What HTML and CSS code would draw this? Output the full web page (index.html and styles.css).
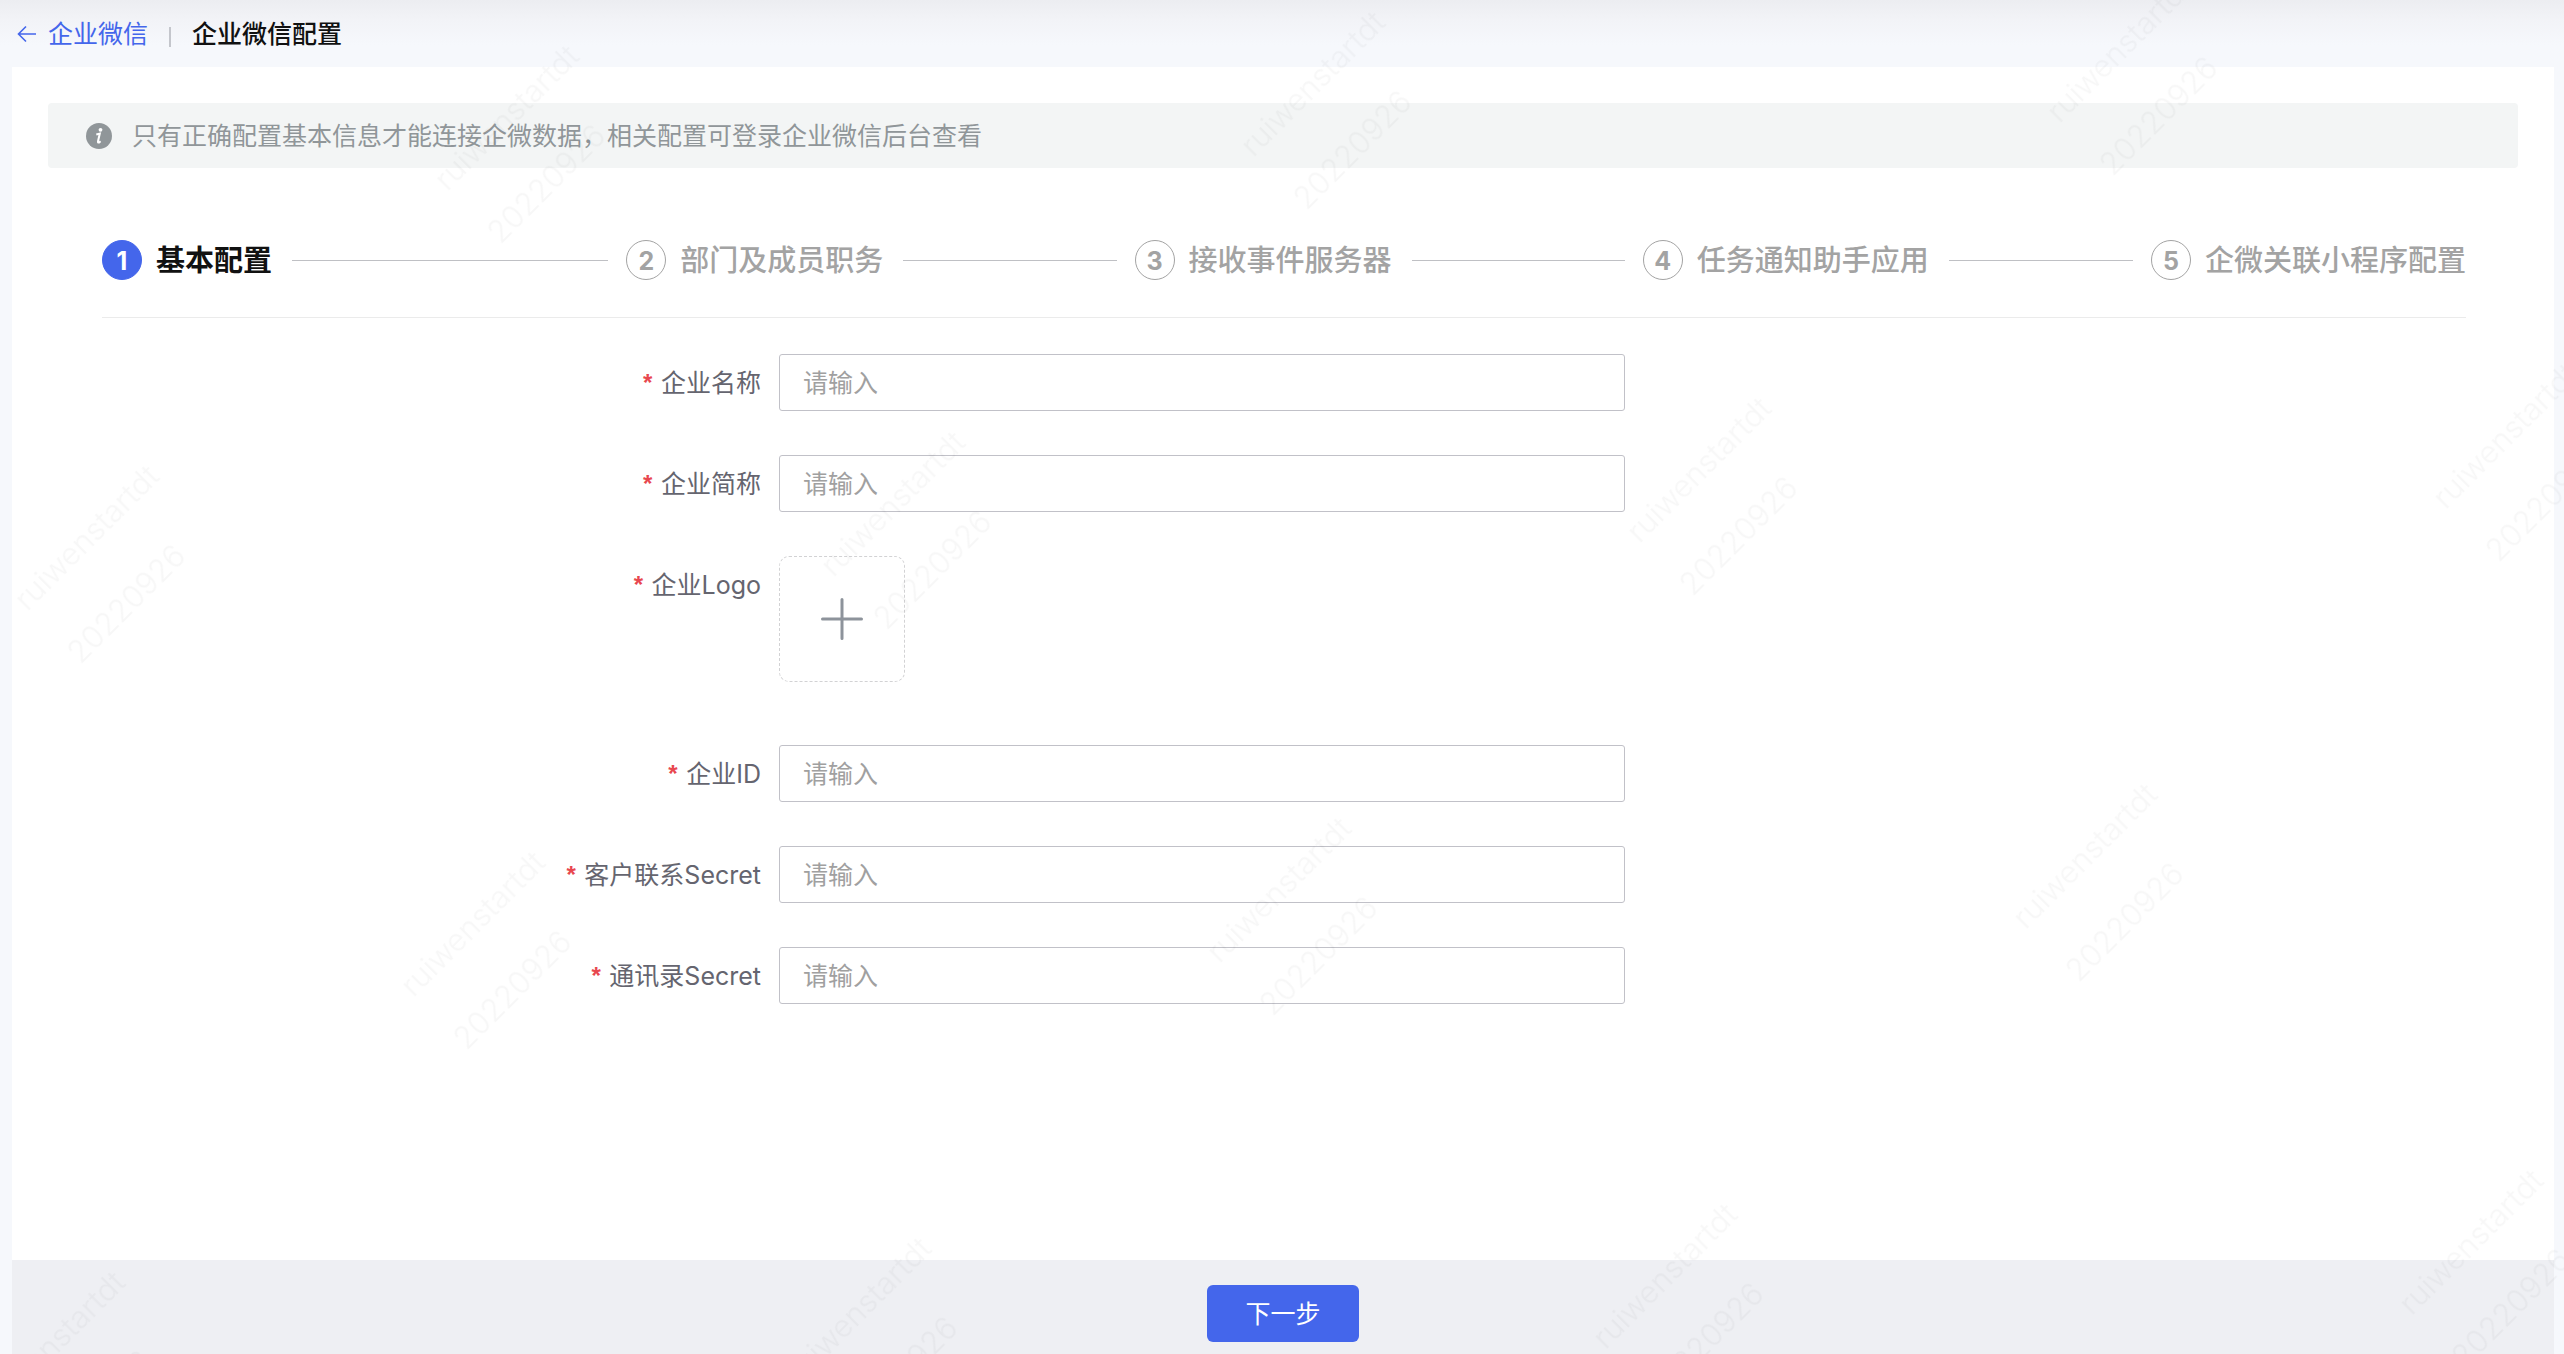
FILE: index.html
```html
<!DOCTYPE html>
<html lang="zh-CN">
<head>
<meta charset="utf-8">
<meta name="viewport" content="width=device-width, initial-scale=1">
<title>企业微信配置</title>
<link rel="stylesheet" href="styles.css">
</head>
<body>
<header class="topbar">
  <a class="back" href="#">
    <svg class="back-icon" viewBox="0 0 20 20" aria-hidden="true"><path d="M19 10H2M9 2.500L1.500 10L9 17.500"/></svg>
    <span>企业微信</span>
  </a>
  <span class="divider"></span>
  <h1 class="title">企业微信配置</h1>
</header>

<main class="panel">
  <div class="notice" role="note">
    <svg class="notice-icon" viewBox="0 0 26 26" aria-hidden="true">
      <circle class="disc" cx="13" cy="13" r="13"/>
      <circle class="mark" cx="14.500" cy="6.800" r="1.900"/>
      <path class="stem" d="M10.300 11.500L13.800 10.600L12 18.200Q11.700 20 13 19.500L14.600 18.300"/>
    </svg>
    <span>只有正确配置基本信息才能连接企微数据，相关配置可登录企业微信后台查看</span>
  </div>

  <div class="content">
    <ol class="steps">
      <li class="step active"><span class="num">1</span><span class="name">基本配置</span></li>
      <li class="step"><span class="num">2</span><span class="name">部门及成员职务</span></li>
      <li class="step"><span class="num">3</span><span class="name">接收事件服务器</span></li>
      <li class="step"><span class="num">4</span><span class="name">任务通知助手应用</span></li>
      <li class="step"><span class="num">5</span><span class="name">企微关联小程序配置</span></li>
    </ol>

    <form class="form" id="config">
      <div class="row">
        <label class="label" for="name">企业名称</label>
        <input class="input" id="name" type="text" placeholder="请输入">
      </div>
      <div class="row">
        <label class="label" for="short">企业简称</label>
        <input class="input" id="short" type="text" placeholder="请输入">
      </div>
      <div class="row logo-row">
        <label class="label" for="logo">企业Logo</label>
        <button class="upload" id="logo" type="button">
          <svg class="plus" viewBox="0 0 42 42" aria-hidden="true"><path d="M21 1.500V40.500M1.500 21H40.500"/></svg>
        </button>
      </div>
      <div class="row">
        <label class="label" for="corp">企业ID</label>
        <input class="input" id="corp" type="text" placeholder="请输入">
      </div>
      <div class="row">
        <label class="label" for="customer">客户联系Secret</label>
        <input class="input" id="customer" type="text" placeholder="请输入">
      </div>
      <div class="row">
        <label class="label" for="contacts">通讯录Secret</label>
        <input class="input" id="contacts" type="text" placeholder="请输入">
      </div>
    </form>
  </div>

  <footer class="footer">
    <button class="next" type="submit" form="config">下一步</button>
  </footer>
</main>

<svg class="watermark" aria-hidden="true">
  <defs>
    <pattern id="mark" width="594" height="546" patternUnits="userSpaceOnUse" patternTransform="translate(-114 612) rotate(-45)">
      <text x="100" y="100">ruiwenstartdt</text>
      <text x="100" y="175">20220926</text>
    </pattern>
  </defs>
  <rect width="100%" height="100%" fill="url(#mark)"/>
</svg>
</body>
</html>
```

FILE: styles.css
```css
* {
  box-sizing: border-box;
}

body {
  margin: 0;
  min-height: 100vh;
  display: flex;
  flex-direction: column;
  background: #f6f8fc linear-gradient(#ecedf1, #f2f3f7 20px, #f6f8fc 45px) no-repeat;
  color: #111;
  font: 25px/36px Inter, "Noto Sans CJK SC", sans-serif;
}

button,
input {
  font: inherit;
}

.topbar {
  display: flex;
  align-items: center;
  height: 67px;
  padding: 0 17px;
}

.back {
  display: flex;
  align-items: center;
  gap: 11px;
  color: #4466eb;
  text-decoration: none;
}

.back-icon {
  width: 20px;
  height: 20px;
  fill: none;
  stroke: currentColor;
  stroke-width: 1.6;
}

.divider {
  width: 2px;
  height: 20px;
  margin: 6px 21px 0;
  background: #c4c6cc;
}

.title {
  margin: 0;
  font-size: 25px;
  font-weight: 500;
}

.panel {
  flex: 1;
  display: flex;
  flex-direction: column;
  margin: 0 10px 0 12px;
  background: #fff;
}

.notice {
  display: flex;
  align-items: center;
  gap: 20px;
  height: 65px;
  margin: 36px 36px 0;
  padding: 0 38px;
  border-radius: 4px;
  background: #f3f5f5;
  color: #909699;
}

.notice-icon {
  width: 26px;
  height: 26px;
}

.disc {
  fill: #909699;
}

.mark {
  fill: #fff;
}

.stem {
  fill: none;
  stroke: #fff;
  stroke-width: 2;
}

.content {
  flex: 1;
  padding: 0 88px 0 90px;
}

.steps {
  display: flex;
  gap: 18px;
  margin: 0;
  padding: 72px 0 37px;
  border-bottom: 1px solid #ebebeb;
  list-style: none;
}

.step {
  flex: 1 1 0;
  display: flex;
  align-items: center;
  color: #a3a3a3;
  font-size: 29px;
  line-height: 40px;
  white-space: nowrap;
}

.step:first-child {
  flex-basis: 16px;
}

.step:last-child {
  flex: none;
}

.step:not(:last-child)::after {
  content: "";
  flex: 1;
  height: 1px;
  margin-left: 20px;
  background: #bfc0c4;
}

.num {
  display: flex;
  align-items: center;
  justify-content: center;
  width: 40px;
  height: 40px;
  padding-top: 2px;
  margin-right: 14px;
  border: 1px solid #a3a3a3;
  border-radius: 50%;
  font-size: 25px;
  font-weight: 700;
}

.name {
  padding-top: 2px;
  font-weight: 500;
  line-height: 38px;
}

.active {
  color: #111;
}

.active .num {
  border-color: #4466eb;
  background: #4466eb;
  color: #fff;
}

.active .name {
  font-weight: 700;
}

.form {
  display: flex;
  flex-direction: column;
  gap: 44px;
  padding: 36px 0;
}

.row {
  display: grid;
  grid-template-columns: 677fr 846fr 841fr;
  align-items: start;
}

.logo-row {
  padding-bottom: 19px;
}

.label {
  padding: 2px 18px 0 0;
  color: #65656f;
  line-height: 55px;
  text-align: right;
}

.label::before {
  content: "*";
  margin-right: 6px;
  color: #e8474f;
  font-family: "Liberation Mono", monospace;
  font-weight: 700;
  font-size: 24px;
  line-height: 1;
}

.input {
  width: 100%;
  height: 57px;
  padding: 0 23px;
  border: 1px solid #c1c1c8;
  border-radius: 3px;
  background: #fff;
  color: #111;
}

.input::placeholder {
  color: #a0a0a0;
  opacity: 1;
}

.upload {
  display: flex;
  align-items: center;
  justify-content: center;
  width: 126px;
  height: 126px;
  padding: 0;
  border: 1px dashed #d2d2d4;
  border-radius: 10px;
  background: #fff;
}

.plus {
  width: 42px;
  height: 42px;
  fill: none;
  stroke: #8d939b;
  stroke-width: 3;
  stroke-linecap: round;
}

.footer {
  display: flex;
  justify-content: center;
  padding: 25px 0 12px;
  background: #eeeff3;
}

.next {
  height: 57px;
  padding: 0 38px;
  border: 0;
  border-radius: 6px;
  background: #4466eb;
  color: #fff;
}

.watermark {
  position: fixed;
  inset: 0;
  width: 100%;
  height: 100%;
  pointer-events: none;
}

.watermark text {
  fill: #000;
  fill-opacity: 0.03;
  font-family: Inter, sans-serif;
  font-size: 31px;
  font-weight: 300;
}
```
